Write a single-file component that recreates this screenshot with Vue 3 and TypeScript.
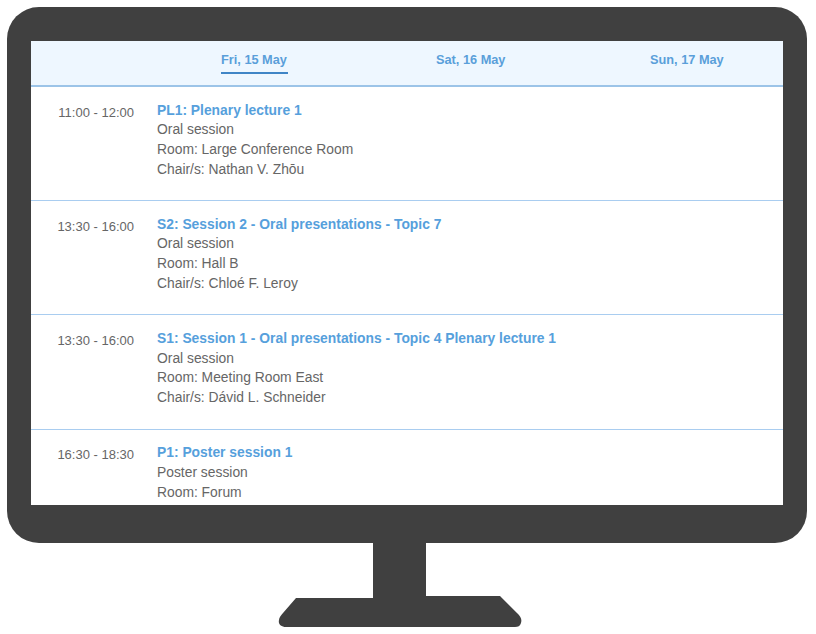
<script setup lang="ts">
interface Session { time: string; title: string; lines: string[] }
const days: string[] = ['Fri, 15 May', 'Sat, 16 May', 'Sun, 17 May']
const sessions: Session[] = [
  { time: '11:00 - 12:00', title: 'PL1: Plenary lecture 1', lines: ['Oral session', 'Room: Large Conference Room', 'Chair/s: Nathan V. Zhōu'] },
  { time: '13:30 - 16:00', title: 'S2: Session 2 - Oral presentations - Topic 7', lines: ['Oral session', 'Room: Hall B', 'Chair/s: Chloé F. Leroy'] },
  { time: '13:30 - 16:00', title: 'S1: Session 1 - Oral presentations - Topic 4 Plenary lecture 1', lines: ['Oral session', 'Room: Meeting Room East', 'Chair/s: Dávid L. Schneider'] },
  { time: '16:30 - 18:30', title: 'P1: Poster session 1', lines: ['Poster session', 'Room: Forum'] },
]
</script>

<template>
  <main class="page">
    <div class="monitor">
      <div class="screen">
        <nav class="tabs">
          <span v-for="(d, i) in days" :key="d" class="tab" :class="['tab' + i, { active: i === 0 }]">{{ d }}</span>
        </nav>
        <section v-for="s in sessions" :key="s.title" class="row">
          <div class="time">{{ s.time }}</div>
          <div class="info">
            <div class="title">{{ s.title }}</div>
            <div v-for="l in s.lines" :key="l" class="line">{{ l }}</div>
          </div>
        </section>
      </div>
    </div>
    <div class="neck"></div>
    <svg class="base" width="244" height="33" viewBox="0 0 244 33" aria-hidden="true">
      <path d="M18 2 L95 2 L95 0 L222 0 L239 17 C243 21 244 23 243 27 C242 30 240 31 237 31 L8 31 C3 31 0 28 1 24 C1 22 3 19 5 17 Z" fill="#404040" />
    </svg>
  </main>
</template>

<style>
html, body { margin: 0; background: #fff; }
</style>

<style scoped>
.page {
  width: 816px;
  height: 634px;
  padding: 7px 0 0 7px;
  box-sizing: border-box;
  overflow: hidden;
  font-family: "Liberation Sans", Arial, sans-serif;
}
.monitor {
  width: 800px;
  height: 536px;
  box-sizing: border-box;
  padding: 34px 24px 38px;
  background: #404040;
  border-radius: 32px;
}
.screen {
  width: 752px;
  height: 464px;
  background: #fff;
  overflow: hidden;
}
.tabs {
  height: 44px;
  background: #eef7ff;
  border-bottom: 2px solid #9cc4e8;
  position: relative;
}
.tab {
  position: absolute;
  top: 11px;
  font-size: 12.75px;
  line-height: 16px;
  font-weight: 700;
  color: #5a9fda;
  padding-bottom: 4px;
  white-space: nowrap;
}
.tab0 { left: 190px; min-width: 67px; }
.tab1 { left: 405px; }
.tab2 { left: 619px; }
.active { border-bottom: 2px solid #3f85c6; }
.row {
  display: flex;
  height: 113.2px;
  border-bottom: 1px solid #a9cdf0;
}
.time {
  width: 103px;
  padding-top: 17.7px;
  text-align: right;
  font-size: 13px;
  line-height: 16px;
  color: #666;
  flex: none;
}
.info {
  margin-left: 23px;
  padding-top: 13.5px;
}
.title {
  font-size: 13.85px;
  line-height: 19.8px;
  font-weight: 700;
  color: #56a0dc;
}
.line {
  font-size: 13.85px;
  line-height: 19.8px;
  color: #666;
}
.neck {
  width: 53px;
  height: 56px;
  margin-left: 366px;
  background: #404040;
}
.base {
  display: block;
  margin: -3px 0 0 271px;
}
</style>
